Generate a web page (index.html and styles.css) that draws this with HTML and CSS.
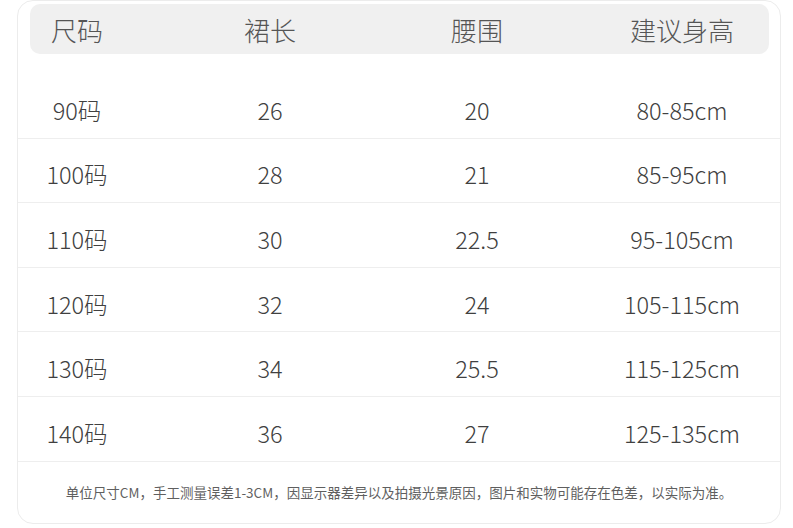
FILE: index.html
```html
<!DOCTYPE html>
<html lang="zh-CN">
<head>
<meta charset="utf-8">
<title>尺码表</title>
<link rel="stylesheet" href="styles.css">
</head>
<body>
<div class="card">
  <div class="head grid">
    <div>尺码</div><div>裙长</div><div>腰围</div><div>建议身高</div>
  </div>
  <div class="rows">
    <div class="row grid"><div>90码</div><div>26</div><div>20</div><div>80-85cm</div></div>
    <div class="row grid"><div>100码</div><div>28</div><div>21</div><div>85-95cm</div></div>
    <div class="row grid"><div>110码</div><div>30</div><div>22.5</div><div>95-105cm</div></div>
    <div class="row grid"><div>120码</div><div>32</div><div>24</div><div>105-115cm</div></div>
    <div class="row grid"><div>130码</div><div>34</div><div>25.5</div><div>115-125cm</div></div>
    <div class="row grid"><div>140码</div><div>36</div><div>27</div><div>125-135cm</div></div>
  </div>
  <div class="note">单位尺寸CM，手工测量误差1-3CM，因显示器差异以及拍摄光景原因，图片和实物可能存在色差，以实际为准。</div>
</div>
</body>
</html>
```
FILE: styles.css
```css
* { box-sizing: border-box; }
html, body { margin: 0; padding: 0; background: #ffffff; }
body {
  width: 793px;
  height: 528px;
  overflow: hidden;
  font-family: "Noto Sans CJK SC", "Noto Sans", sans-serif;
}
.card {
  margin: 0 12px 0 17px;
  height: 524px;
  border: 1px solid #ececec;
  border-radius: 16px;
  display: flex;
  flex-direction: column;
}
.grid {
  display: grid;
  grid-template-columns: 94px 172px 122px 168px;
  column-gap: 60px;
  justify-items: center;
  align-items: center;
}
.head {
  margin: 3px 11px 0 12px;
  height: 50px;
  background: #f0f0f0;
  border-radius: 10px;
  font-size: 26px;
  font-weight: 300;
  color: #555555;
  white-space: nowrap;
}
.rows {
  margin-top: 20px;
}
.row {
  height: 64.6px;
  padding: 8px 12px 0 12px;
  border-bottom: 1px solid #eeeeee;
  font-size: 23.5px;
  font-weight: 300;
  color: #404040;
  white-space: nowrap;
}
.note {
  flex: 1;
  display: flex;
  align-items: center;
  justify-content: center;
  font-size: 13.5px;
  color: #5f5f5f;
  white-space: nowrap;
}
```
